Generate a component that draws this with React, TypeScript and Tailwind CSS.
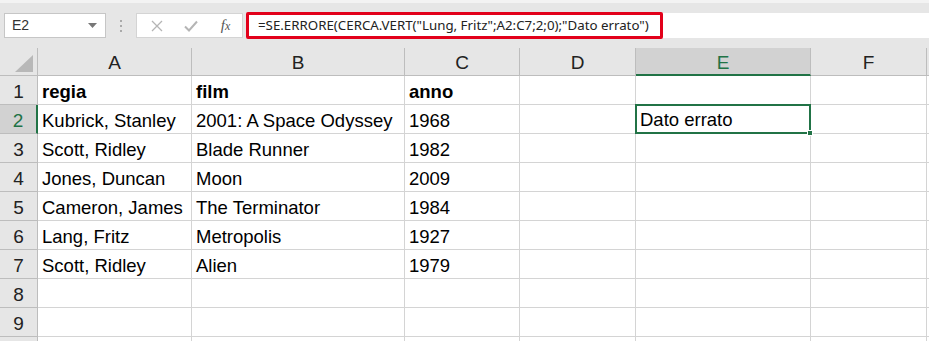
import React from "react";

const cols = ["A", "B", "C", "D", "E", "F"];
const rows: (string | null)[][] = [
  ["regia", "film", "anno", "", "", ""],
  ["Kubrick, Stanley", "2001: A Space Odyssey", "1968", "", "Dato errato", ""],
  ["Scott, Ridley", "Blade Runner", "1982", "", "", ""],
  ["Jones, Duncan", "Moon", "2009", "", "", ""],
  ["Cameron, James", "The Terminator", "1984", "", "", ""],
  ["Lang, Fritz", "Metropolis", "1927", "", "", ""],
  ["Scott, Ridley", "Alien", "1979", "", "", ""],
  ["", "", "", "", "", ""],
  ["", "", "", "", "", ""],
  ["", "", "", "", "", ""],
];

export default function App() {
  const font = { fontFamily: '"Liberation Sans", Arial, sans-serif' };
  return (
    <div className="w-[929px] h-[341px] overflow-hidden bg-white" style={font}>
      {/* toolbar */}
      <div className="h-[48px] bg-[#e6e6e6] border-t-[3px] border-[#f3f3f3] flex items-start pt-[10px] pl-[4px]">
        <div className="w-[102px] h-[25px] bg-white border border-[#c6c6c6] flex items-center justify-between pl-[7px] pr-[8px] text-[14px] text-[#333]">
          <span>E2</span>
          <svg width="9" height="5" viewBox="0 0 9 5"><path d="M0 0h9L4.5 5z" fill="#777" /></svg>
        </div>
        <div className="w-[30px] h-[25px] flex flex-col items-center justify-center gap-[3px]">
          <div className="w-[2px] h-[2px] bg-[#aaa]" />
          <div className="w-[2px] h-[2px] bg-[#aaa]" />
          <div className="w-[2px] h-[2px] bg-[#aaa]" />
        </div>
        <div className="w-[107px] h-[25px] bg-white border border-[#d4d4d4] flex items-center">
          <div className="w-[36px] flex justify-center pl-[4px]">
            <svg width="12" height="12" viewBox="0 0 12 12"><path d="M1 1l10 10M11 1L1 11" stroke="#b5b5b5" strokeWidth="1.3" /></svg>
          </div>
          <div className="w-[36px] flex justify-center">
            <svg width="14" height="12" viewBox="0 0 14 12"><path d="M1 6.5l4 4L13 1.5" stroke="#b5b5b5" strokeWidth="2" fill="none" /></svg>
          </div>
          <div className="w-[33px] flex justify-center text-[15px] italic text-[#555]" style={{ fontFamily: '"Liberation Serif", serif' }}>
            f<span className="text-[12px] mt-[3px]">x</span>
          </div>
        </div>
        <div className="ml-[3px] flex-1 h-[25px] bg-white flex items-center">
          <div className="w-[417px] h-[27px] rounded-[2px] border-[3px] border-[#e2001a] flex items-center pl-[9px] text-[13.3px] text-[#222] whitespace-nowrap" style={{ fontFamily: '"Noto Sans", "Open Sans", sans-serif' }}>
            =SE.ERRORE(CERCA.VERT("Lung, Fritz";A2:C7;2;0);"Dato errato")
          </div>
        </div>
      </div>
      {/* grid */}
      <div className="grid grid-cols-[38px_154px_213px_115px_116px_175px_116px_2px] grid-rows-[28px_repeat(10,29px)] text-[18.5px] leading-[20px] text-black">
        <div className="bg-[#e6e6e6] border-r border-b border-[#bdbdbd] flex items-end justify-end pr-[4px] pb-[3px]">
          <svg width="18" height="17" viewBox="0 0 18 17"><path d="M18 0V17H0z" fill="#b8b8b8" /></svg>
        </div>
        {cols.map((c) =>
          c === "E" ? (
            <div key={c} className="bg-[#d2d2d2] border-r border-[#bdbdbd] border-b-[2px] border-b-[#217346] flex items-center justify-center pt-[3px] text-[#217346] text-[19px]">
              {c}
            </div>
          ) : (
            <div key={c} className="bg-[#e6e6e6] border-r border-b border-[#bdbdbd] flex items-center justify-center pt-[2px] text-[#222] text-[19px]">
              {c}
            </div>
          )
        )}
        <div className="bg-[#e6e6e6] border-b border-[#bdbdbd]" />
        {rows.map((r, i) => (
          <React.Fragment key={i}>
            {i === 1 ? (
              <div className="bg-[#d2d2d2] border-r-[2px] border-r-[#217346] border-b border-[#bdbdbd] flex items-center justify-center pt-[3px] text-[#217346] text-[19px]">
                {i + 1}
              </div>
            ) : (
              <div className="bg-[#e6e6e6] border-r border-b border-[#bdbdbd] flex items-center justify-center pt-[3px] text-[#222] text-[19px]">
                {i < 9 ? i + 1 : ""}
              </div>
            )}
            {r.map((v, j) =>
              i === 1 && j === 4 ? (
                <div key={j} className="relative border-[2px] border-[#217346] -ml-[1px] -mt-[1px] flex items-end pl-[3px] pb-[2px] whitespace-nowrap h-[30px] z-10">
                  {v}
                  <div className="absolute -right-[4px] -bottom-[4px] w-[6px] h-[6px] bg-[#217346] border border-white" />
                </div>
              ) : (
                <div key={j} className={`border-r border-b border-[#d4d4d4] flex items-end pl-[4px] pb-[2px] whitespace-nowrap ${i === 0 ? "font-bold" : ""}`}>
                  {v}
                </div>
              )
            )}
            <div className="border-b border-[#d4d4d4]" />
          </React.Fragment>
        ))}
      </div>
    </div>
  );
}
